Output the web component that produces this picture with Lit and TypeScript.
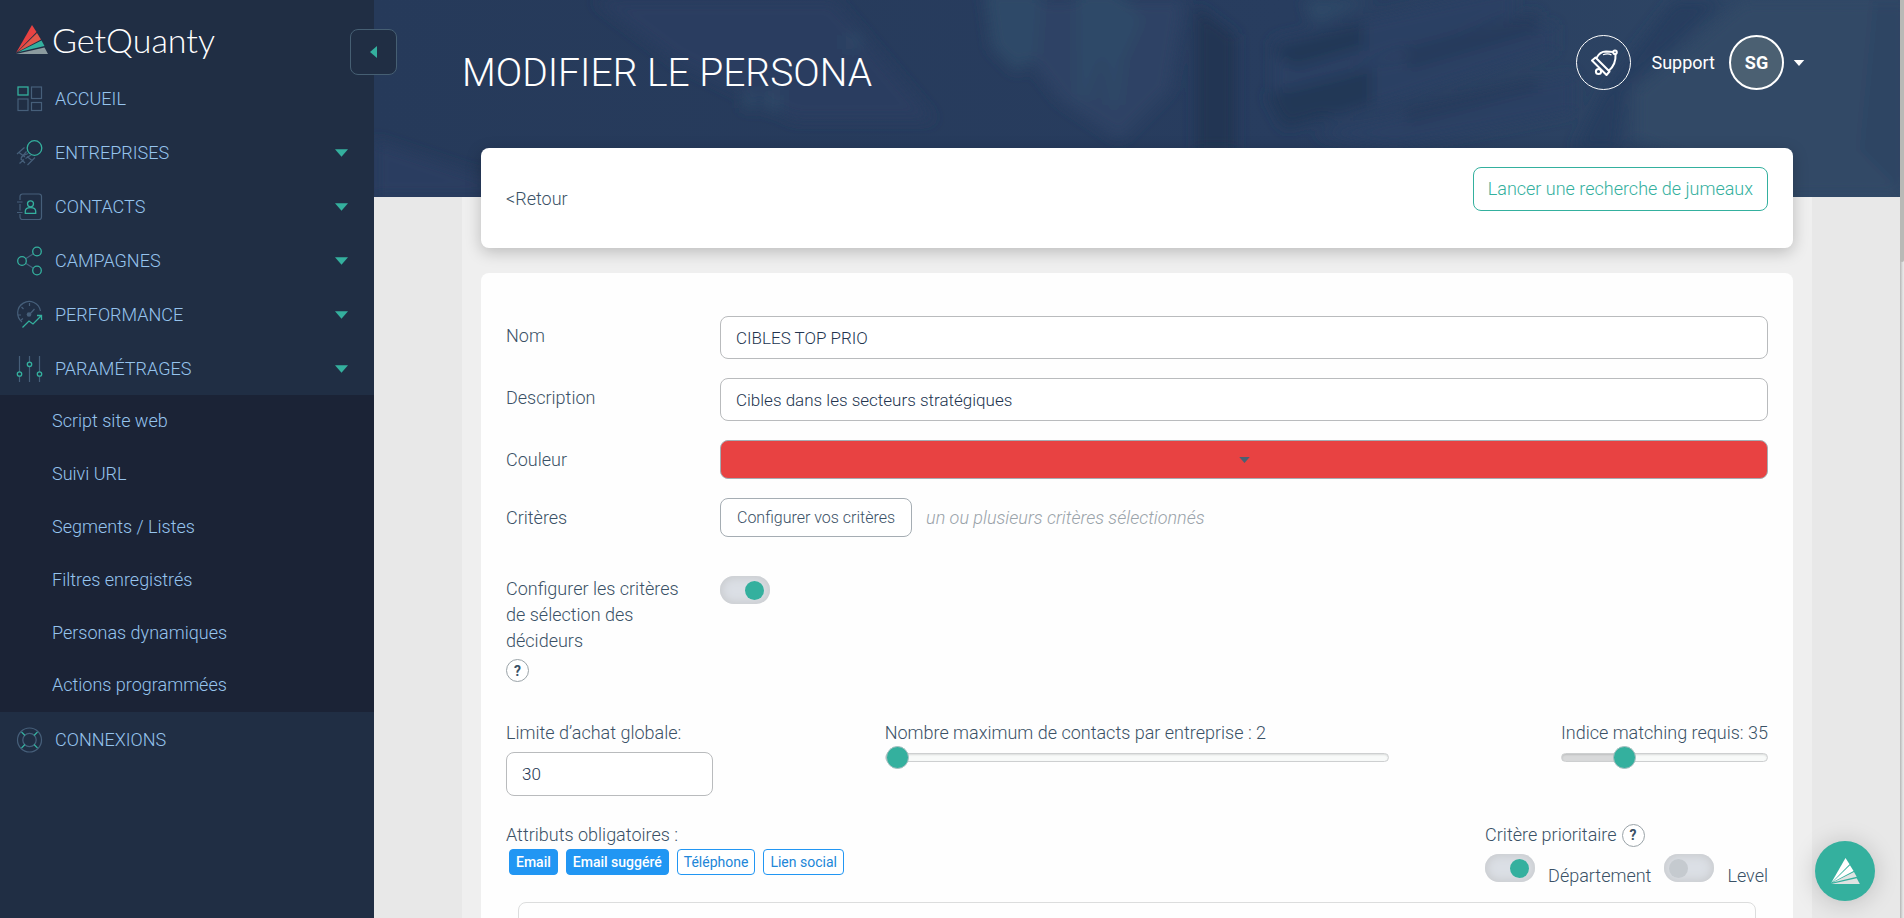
import { LitElement, html, css, svg, type TemplateResult } from "lit";
import { customElement, state } from "lit/decorators.js";
import { classMap } from "lit/directives/class-map.js";

type Entry = { label: string; icon: TemplateResult; children?: string[]; caret?: boolean };

const icons = {
  home: svg`<rect class="t" x="1" y="1" width="10" height="8"/><rect class="m" x="14.5" y="1" width="10" height="11.5"/><rect class="m" x="1" y="13" width="10" height="11.5"/><rect class="m" x="14.5" y="16.500" width="10" height="8"/>`,
  companies: svg`<circle class="t" cx="17.500" cy="8" r="7.300"/><path class="m" d="M0 14 7.500 7.500M4 18 9.500 11.500M2.500 23.500 7 19.500M6.500 15.500 11 13.500M10.500 25 18 17.500M8.500 18.500 14 15M2 12.500l6 4.500M5 16l-1 3 4 4M10 16.500l5 4"/>`,
  contacts: svg`<path class="m" d="M3 6V2.500A2.500 2.500 0 0 1 5.500 0H22a2.500 2.500 0 0 1 2.500 2.500V23a2.500 2.500 0 0 1-2.500 2.500H5.500A2.500 2.500 0 0 1 3 23v-3M0 8h5.500M0 18.500h5.500M3 10v6.500"/><circle class="t" cx="13.500" cy="9.800" r="3"/><path class="t" d="M8.300 19.300v-2c0-2 2-3.600 5.200-3.600s5.200 1.600 5.200 3.600v2z"/>`,
  campaigns: svg`<path class="m" d="M9 10.500 16 6M9 15.500l7 4.500"/><circle class="t" cx="5" cy="13" r="4.300"/><circle class="t" cx="20" cy="3.500" r="4.300"/><circle class="t" cx="20" cy="22.500" r="4.300"/>`,
  performance: svg`<path class="m" d="M5 20A11.500 11.500 0 1 1 23.500 9M12.500 1v3M1 13h3M4.500 5l2 2M4 18l2-1.500M12.500 12.500 17.500 7"/><circle class="mf" cx="12" cy="12.500" r="2.300"/><path class="t" d="M5.500 25.500 12 19l4 3 8-8M20 13.500h4.500V18"/>`,
  settings: svg`<path class="m" d="M2.500 0v16M2.500 20v6M12.500 0v6M12.500 10.500V26M22.500 0v16M22.500 20v6"/><circle class="t" cx="2.500" cy="18" r="2.200"/><circle class="t" cx="12.500" cy="8.300" r="2.200"/><circle class="t" cx="22.500" cy="18" r="2.200"/>`,
  connections: svg`<circle class="m" cx="12.500" cy="13" r="12"/><circle class="m" cx="12.500" cy="13" r="6.700"/><path class="t" d="m4.500 5 3.500 3.500M17 17.500l3.500 3.500M20.500 5 17 8.500M8 17.500 4.500 21"/>`,
};

const logoMark = (cls: string) => html`<svg class=${cls} viewBox="0 0 32 29" aria-hidden="true">
  <path class="a" d="M0 28 16 0l4.500 7z"/><path class="b" d="M1.500 27 21 8l4 6.500z"/>
  <path class="c" d="M2 27.300 25.500 15.500l3 5.500z"/><path class="d" d="M0 29l28.500-6.500L32 29z"/></svg>`;

const caret = html`<svg class="caret" viewBox="0 0 14 8" aria-hidden="true"><path d="M0 0h14L7 8z"/></svg>`;

@customElement("app-root")
export class AppRoot extends LitElement {
  @state() private contacts = 2;
  @state() private matching = 35;
  @state() private tags = [
    { label: "Email", on: true },
    { label: "Email suggéré", on: true },
    { label: "Téléphone", on: false },
    { label: "Lien social", on: false },
  ];

  private menu: Entry[] = [
    { label: "ACCUEIL", icon: icons.home },
    { label: "ENTREPRISES", icon: icons.companies, caret: true },
    { label: "CONTACTS", icon: icons.contacts, caret: true },
    { label: "CAMPAGNES", icon: icons.campaigns, caret: true },
    { label: "PERFORMANCE", icon: icons.performance, caret: true },
    {
      label: "PARAMÉTRAGES", icon: icons.settings, caret: true,
      children: ["Script site web", "Suivi URL", "Segments / Listes", "Filtres enregistrés", "Personas dynamiques", "Actions programmées"],
    },
    { label: "CONNEXIONS", icon: icons.connections },
  ];

  static styles = css`
    :host {
      --teal: #34b09e;
      --text: #3a5166;
      display: grid;
      grid-template-columns: 374px minmax(0, 1fr) 4px;
      height: 100vh;
      overflow: hidden;
      background: #e8e8e8;
      color: var(--text);
      font: 300 18px/26px Roboto, "Open Sans", sans-serif;
    }
    * { box-sizing: border-box; }
    button, input, select { font: inherit; color: inherit; margin: 0; }
    button { cursor: pointer; }
    a { color: inherit; text-decoration: none; }

    .side { position: relative; z-index: 3; background: #202e44; color: #96c4ee; }
    .brand { display: flex; align-items: center; gap: 4px; height: 71px; padding: 8px 16px 0; color: #fff; }
    .brand-name { font: 300 34px/40px Lato, sans-serif; }
    .brand-mark { width: 32px; height: 29px; }
    .brand-mark .a { fill: #e84242; }
    .brand-mark .b { fill: #e2574a; }
    .brand-mark .c { fill: #34b09e; }
    .brand-mark .d { fill: #8c9b9f; }
    .collapse {
      position: absolute; top: 29px; right: -23px; width: 47px; height: 46px; padding: 0;
      display: grid; place-items: center; background: #202e44; border: 1px solid #465f73; border-radius: 8px;
    }
    .collapse svg { width: 7px; height: 12px; fill: var(--teal); }
    .menu, .sub { list-style: none; margin: 0; padding: 0; }
    .item { display: flex; align-items: center; gap: 12px; height: 54px; padding: 2px 26px 0 17px; }
    .item .label { flex: 1; }
    .icon { width: 26px; height: 26px; overflow: visible; fill: none; }
    .icon .t { stroke: var(--teal); stroke-width: 1.3; }
    .icon .m { stroke: #465f7a; stroke-width: 1.2; }
    .icon .mf { fill: #465f7a; }
    .caret { width: 13px; height: 8px; fill: var(--teal); }
    .sub { background: #1b2336; }
    .sub a { display: flex; align-items: center; height: 53px; padding: 0 0 2px 52px; }
    .sub li:last-child a { height: 52px; }

    .main { overflow-y: auto; scrollbar-width: none; }
    .hero { position: relative; height: 197px; padding: 35px 95px 0 88px; display: flex; justify-content: space-between; align-items: flex-start; color: #fff; background: #263b5b; }
    .photo { position: absolute; inset: 0; width: 100%; height: 100%; }
    .title { position: relative; margin: 8px 0 0; font-size: 39px; line-height: 60px; font-weight: 300; }
    .user { position: relative; display: flex; align-items: center; font-weight: 400; }
    .bell { width: 55px; height: 55px; padding: 0; border: 1px solid #fff; border-radius: 50%; background: none; display: grid; place-items: center; }
    .bell svg { width: 26px; height: 26px; overflow: visible; fill: none; stroke: #fff; stroke-width: 2; stroke-linejoin: round; }
    .account { display: flex; align-items: center; padding: 0 0 0 20px; border: 0; background: none; color: #fff; }
    .avatar { display: grid; place-items: center; width: 55px; height: 55px; margin: 0 9px 0 14px; border: 2px solid #fff; border-radius: 50%; background: #4b6072; font-weight: 700; }
    .account .caret { width: 12px; height: 6px; fill: #fff; }

    .content { position: relative; margin: -49px 88px 0; padding: 0 19px 40px; background: linear-gradient(transparent 49px, #efefef 49px); }
    .bar { display: flex; justify-content: space-between; align-items: flex-start; min-height: 100px; padding: 19px 25px; background: #fff; border-radius: 8px; box-shadow: 0 4px 16px rgba(0, 0, 0, 0.22); }
    .back { margin-top: 19px; }
    .search { height: 44px; padding: 0 14px; border: 1px solid var(--teal); border-radius: 8px; background: #fff; color: var(--teal); }
    .card { margin-top: 25px; padding: 43px 25px 25px; background: #fefefe; border-radius: 8px; }

    .rows { display: grid; grid-template-columns: 184px minmax(0, 1fr); gap: 19px 30px; align-items: center; }
    .rows .upper { padding-bottom: 4px; }
    .field { width: 100%; height: 43px; padding: 0 15px; border: 1px solid #b9bbbd; border-radius: 8px; background: #fff; color: #22344f; font-size: 17px; }
    .number { width: 100%; appearance: textfield; }
    .number::-webkit-inner-spin-button { appearance: none; }
    .colour { display: grid; }
    .colour > * { grid-area: 1 / 1; }
    .colour select { width: 100%; height: 39px; appearance: none; border: 1px solid #a5adb3; border-radius: 8px; background: #e84242; }
    .colour .caret { place-self: center; width: 11px; height: 6px; fill: #4b6072; pointer-events: none; }
    .criteria { display: flex; align-items: center; gap: 14px; }
    .configure { height: 39px; padding: 0 16px; border: 1px solid #a5adb3; border-radius: 8px; background: #fff; font-size: 16px; }
    .note { color: #9aa3aa; font-style: italic; }

    .decision { display: grid; grid-template-columns: 184px minmax(0, 1fr); column-gap: 30px; align-items: start; margin-top: 39px; }
    .help { display: inline-grid; place-items: center; width: 23px; height: 23px; padding: 0; border: 1px solid #9aa3a8; border-radius: 50%; background: #fff; font-size: 14px; line-height: 1; font-weight: 700; }
    .decision .help { display: grid; margin-top: 5px; }
    .switch { appearance: none; display: block; flex: none; width: 50px; height: 28px; padding: 5px; border-radius: 14px; background: #dbdfe5; box-shadow: inset 0 0 8px 2px #c9cbce; cursor: pointer; }
    .switch::before { content: ""; display: block; width: 19px; height: 19px; border-radius: 50%; background: #c5cacf; }
    .switch:checked::before { margin-left: 20px; background: var(--teal); }

    .limits { display: grid; grid-template-columns: 207fr 505fr 206fr; column-gap: 172px; align-items: start; margin-top: 38px; }
    .limits label { display: block; white-space: nowrap; }
    .number { height: 44px; margin-top: 6px; }
    .range { appearance: none; display: block; width: 100%; height: 23px; background: none; }
    .range::-webkit-slider-runnable-track {
      height: 9px; border: 1px solid #cdcfd0; border-radius: 5px; box-shadow: inset 0 1px 2px rgba(0, 0, 0, 0.12);
      background: linear-gradient(90deg, #d8d9da var(--fill), #f8faf9 var(--fill));
    }
    .range::-webkit-slider-thumb { appearance: none; width: 23px; height: 23px; margin-top: -8px; border: 1px solid #a9bfc0; border-radius: 50%; background: var(--teal); }

    .options { display: flex; justify-content: space-between; align-items: flex-start; margin-top: 26px; }
    .tags { display: flex; gap: 8px; padding: 1px 3px; }
    .tag { height: 26px; padding: 0 6px; border: 1px solid #2196f3; border-radius: 4px; background: #fff; color: #2186d8; font-size: 14px; line-height: 1; font-weight: 400; }
    .tag.on { background: #2196f3; color: #fff; font-weight: 500; }
    .heading { display: flex; align-items: center; gap: 5px; }
    .priority { display: flex; align-items: flex-start; gap: 13px; margin-top: 6px; }
    .priority label { margin-top: 9px; }

    .panel { min-height: 240px; margin: 13px 12px 0; border: 1px solid #dcdddd; border-radius: 8px; }
    .scroll { z-index: 3; background: linear-gradient(90deg, #b5b5b5, #e6e6e6 3px); }
    .thumb { height: 28.5vh; background: #b9b9b6; border-radius: 0 0 2px 2px; }
    .chat { position: absolute; z-index: 4; right: 29px; bottom: 17px; width: 60px; height: 60px; padding: 0; border: 0; border-radius: 50%; display: grid; place-items: center; background: var(--teal); box-shadow: 0 2px 24px rgba(0, 0, 0, 0.18); }
    .chat-mark { width: 31px; height: 26px; fill: #fff; }
    .chat-mark .c, .chat-mark .d { fill: #dfe3e2; }
  `;

  private photo() {
    return html`<svg class="photo" viewBox="0 0 1526 197" preserveAspectRatio="none" aria-hidden="true">
      <defs>
        <linearGradient id="base"><stop offset="0" stop-color="#263a5a"/><stop offset=".6" stop-color="#283d5f"/><stop offset="1" stop-color="#304866"/></linearGradient>
        <filter id="soft" x="-20%" y="-20%" width="140%" height="140%"><feGaussianBlur stdDeviation="7"/></filter>
      </defs>
      <rect width="1526" height="197" fill="url(#base)"/>
      <g filter="url(#soft)">
        <path fill="#293e61" d="M0 140 90 170 180 197H0zM220 0H460L560 120H420L300 60z"/>
        <path fill="#2d4365" d="M610 0h200l-14 90-50 50-60-40z"/>
        <path fill="#2f4a68" d="M610 -10h58l-5 66-20 16-25-24zM702 -10h42l24 30-18 40-5 45h-10l-6-55-14 50h-12z"/>
        <path fill="#2d4a68" d="M472 35h14v14h-14zM370 92h12v16h-12zM392 90h14v20h-14z"/>
        <path fill="#223452" d="M822 6 862 36V150h-40z"/>
        <path fill="#2f4867" d="M930 0h70l-60 24z"/>
        <path fill="#2c4163" d="M900 40 1140 -14v30L900 92zM900 84 1180 24v26L960 120zM940 134 1200 74v38L1020 148z"/>
        <path fill="#243757" d="M895 48 990 22v26l-70 20zM892 94l106-26v36l-88 24z"/>
        <path fill="#273a5b" d="M1030 48l134-36v20l-130 38zM1030 108l134-30v12l-130 34z"/>
        <path fill="#283c5f" d="M1300 0h50l-100 90-6 60h-44l30-60z"/>
        <path fill="#304866" d="M1370 0h156v197h-110L1260 140V90z"/>
        <path fill="#2e4463" d="M1500 0h36v200l-50-50z"/>
      </g>
    </svg>`;
  }

  private slider(id: string, label: string, value: number, min: number, max: number, set: (v: number) => void) {
    return html`<div>
      <label for=${id}>${label} ${value}</label>
      <input class="range" id=${id} type="range" min=${min} max=${max} .value=${String(value)}
        style=${`--fill:${((value - min) / (max - min)) * 100}%`}
        @input=${(e: Event) => set(Number((e.target as HTMLInputElement).value))}>
    </div>`;
  }

  render() {
    return html`
      <nav class="side">
        <a class="brand" href="#">${logoMark("brand-mark")}<span class="brand-name">GetQuanty</span></a>
        <button class="collapse" aria-label="Menu"><svg viewBox="0 0 7 12"><path d="M7 0v12L0 6z"/></svg></button>
        <ul class="menu">
          ${this.menu.map((m) => html`<li>
            <a class="item" href="#"><svg class="icon" viewBox="0 0 26 26" aria-hidden="true">${m.icon}</svg><span class="label">${m.label}</span>${m.caret ? caret : ""}</a>
            ${m.children ? html`<ul class="sub">${m.children.map((c) => html`<li><a href="#">${c}</a></li>`)}</ul>` : ""}
          </li>`)}
        </ul>
      </nav>
      <main class="main">
        <header class="hero">
          ${this.photo()}
          <h1 class="title">MODIFIER LE PERSONA</h1>
          <div class="user">
            <button class="bell" aria-label="Notifications">
              <svg viewBox="0 0 26 26"><path d="M1 10.500 4.500 7.500 18.500 21.500 15.500 25zM5.500 8C7.500 4 10.500 1.500 15 1.500L22.500 2M24.500 4.500C25 12 22 17 18 20.500"/><path d="M12 4.800C14.500 3.800 18 3.500 20.500 5" stroke-width="1.200"/><circle cx="24" cy="2.300" r="1.800"/><circle cx="7.500" cy="21.500" r="2.600"/></svg>
            </button>
            <button class="account"><span>Support</span><span class="avatar">SG</span>${caret}</button>
          </div>
        </header>
        <div class="content">
          <div class="bar">
            <a class="back" href="#">&lt;Retour</a>
            <button class="search">Lancer une recherche de jumeaux</button>
          </div>
          <form class="card" @submit=${(e: Event) => e.preventDefault()}>
            <div class="rows">
              <label class="upper" for="name">Nom</label>
              <input class="field" id="name" type="text" value="CIBLES TOP PRIO">
              <label class="upper" for="desc">Description</label>
              <input class="field" id="desc" type="text" value="Cibles dans les secteurs stratégiques">
              <label for="colour">Couleur</label>
              <div class="colour"><select id="colour"><option value="#e84242"></option></select>${caret}</div>
              <label for="criteria">Critères</label>
              <div class="criteria">
                <button class="configure" id="criteria" type="button">Configurer vos critères</button>
                <span class="note">un ou plusieurs critères sélectionnés</span>
              </div>
            </div>
            <div class="decision">
              <div>
                <label for="decision">Configurer les critères de sélection des décideurs</label>
                <button class="help" type="button">?</button>
              </div>
              <input class="switch" id="decision" type="checkbox" checked>
            </div>
            <div class="limits">
              <div>
                <label for="limit">Limite d’achat globale:</label>
                <input class="field number" id="limit" type="number" value="30">
              </div>
              ${this.slider("contacts", "Nombre maximum de contacts par entreprise :", this.contacts, 2, 20, (v) => (this.contacts = v))}
              ${this.slider("matching", "Indice matching requis:", this.matching, 10, 100, (v) => (this.matching = v))}
            </div>
            <div class="options">
              <div>
                <div class="heading">Attributs obligatoires :</div>
                <div class="tags">
                  ${this.tags.map((t, i) => html`<button type="button" class=${classMap({ tag: true, on: t.on })}
                    @click=${() => (this.tags = this.tags.map((x, j) => (i === j ? { ...x, on: !x.on } : x)))}>${t.label}</button>`)}
                </div>
              </div>
              <div>
                <div class="heading">Critère prioritaire <button class="help" type="button">?</button></div>
                <div class="priority">
                  <input class="switch" id="dep" type="checkbox" checked><label for="dep">Département</label>
                  <input class="switch" id="level" type="checkbox"><label for="level">Level</label>
                </div>
              </div>
            </div>
            <div class="panel"></div>
          </form>
        </div>
      </main>
      <div class="scroll"><div class="thumb"></div></div>
      <button class="chat" aria-label="Chat">${logoMark("chat-mark")}</button>
    `;
  }
}
